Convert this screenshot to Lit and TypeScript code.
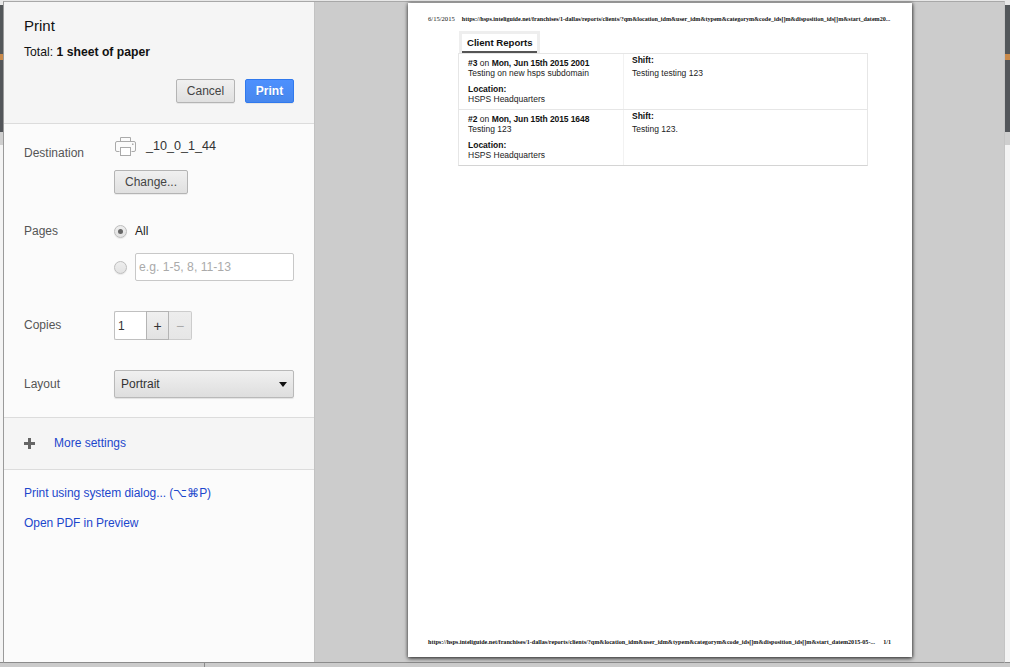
import { LitElement, html, css } from "lit";
import { customElement } from "lit/decorators.js";

@customElement("app-root")
export class AppRoot extends LitElement {
  static styles = css`
    :host { display: block; position: relative; width: 1010px; height: 667px; overflow: hidden; background: #fff; font-family: "Liberation Sans", Arial, sans-serif; font-size: 12px; color: #333; }
    * { box-sizing: border-box; }
    .bg { position: absolute; inset: 0; display: flex; flex-direction: column; }
    .bg-top { height: 5px; background: #e8e8e8; }
    .bg-dark1 { height: 49px; background: #53575a; }
    .bg-orange { height: 6px; background: #c98a4b; }
    .bg-dark2 { height: 72px; background: #53565a; }
    .bg-gray { height: 13px; background: #cfcfcf; }
    .bg-rest { flex: 1; background: #f4f4f4; }
    .bg-bottom { position: absolute; left: 0; right: 0; bottom: 0; height: 5px; background: #cbcbcb; border-top: 1px solid #8c8c8c; }
    .bg-tick { position: absolute; left: 204px; bottom: 0; width: 1px; height: 5px; background: #8a8a8a; }
    .dialog { position: absolute; left: 3px; top: 1px; width: 1002px; height: 662px; display: flex; background: #ccc; border-top: 1px solid #a8a8a8; border-left: 1px solid #9a9a9a; border-right: 1px solid #c4c4c4; border-bottom: 1px solid #8c8c8c; }
    .side { width: 311px; flex: none; background: #fbfbfb; border-right: 1px solid #c2c2c2; display: flex; flex-direction: column; }
    .head { height: 122px; flex: none; background: #f5f5f5; border-bottom: 1px solid #dcdcdc; padding: 15px 20px 0 20px; display: flex; flex-direction: column; }
    h1 { margin: 0; font-size: 15px; font-weight: 400; line-height: 17px; color: #111; }
    .total { margin-top: 11px; font-size: 12.2px; line-height: 15px; color: #111; }
    .total b { font-weight: 700; }
    .head-actions { display: flex; justify-content: flex-end; gap: 10px; margin-top: 19px; }
    button { font-family: inherit; font-size: 12px; color: #444; height: 24px; padding: 0; border: 1px solid #b4b4b4; border-radius: 2px; background: linear-gradient(#f0f0f0, #e0e0e0); box-shadow: 0 1px 0 rgba(0,0,0,.06); }
    .cancel { width: 59px; }
    .primary { width: 49px; background: linear-gradient(#4d90fe, #4787ed); border-color: #3079ed; color: #fff; font-weight: 700; text-shadow: 0 1px rgba(0,0,0,.15); }
    .row { display: flex; padding-left: 20px; }
    .label { width: 90px; flex: none; font-size: 12px; color: #555; line-height: 14px; }
    .body { flex: 1; min-width: 0; }
    .dest { margin-top: 10px; }
    .dest .label { padding-top: 12px; }
    .printer { display: flex; align-items: center; gap: 9px; height: 24px; font-size: 12.6px; color: #333; }
    .change { display: block; width: 74px; margin-top: 12px; }
    .pages { margin-top: 30px; }
    .pages .label { padding-top: 0; }
    .radio-row { display: flex; align-items: center; gap: 8px; height: 14px; font-size: 12px; color: #222; }
    .radio { width: 13px; height: 13px; border-radius: 50%; border: 1px solid #bdbdbd; background: linear-gradient(#eee, #e2e2e2); box-shadow: 0 1px 1px rgba(0,0,0,.08); display: flex; align-items: center; justify-content: center; flex: none; }
    .radio i { width: 5px; height: 5px; border-radius: 50%; background: #666; }
    .radio-input { display: flex; align-items: center; gap: 8px; margin-top: 15px; }
    .range { width: 159px; height: 28px; border: 1px solid #c8c8c8; border-radius: 2px; background: #fff; padding: 0 3px; display: flex; align-items: center; color: #aaa; font-size: 12.2px; }
    .copies { margin-top: 30px; }
    .copies .label { padding-top: 7px; }
    .stepper { display: flex; height: 29px; width: 78px; }
    .num { width: 32px; border: 1px solid #c0c0c0; border-right: none; border-radius: 2px 0 0 2px; background: #fff; padding: 0 0 0 3px; display: flex; align-items: center; font-size: 12px; color: #333; }
    .step { width: 23px; display: flex; align-items: center; justify-content: center; font-size: 14px; font-weight: 400; background: linear-gradient(#f0f0f0, #e2e2e2); border: 1px solid #b4b4b4; color: #333; }
    .step.off { color: #aaa; border-color: #ccc; border-left: none; border-radius: 0 2px 2px 0; background: linear-gradient(#ededed, #e6e6e6); }
    .layout { margin-top: 30px; }
    .layout .label { padding-top: 7px; }
    .select { width: 180px; height: 28px; display: flex; align-items: center; justify-content: space-between; padding: 0 6px 0 6px; border: 1px solid #b9b9b9; border-radius: 2px; background: linear-gradient(#f0f0f0, #dedede); box-shadow: 0 1px 1px rgba(0,0,0,.1); font-size: 12px; color: #333; }
    .arrow { width: 0; height: 0; border-left: 4px solid transparent; border-right: 4px solid transparent; border-top: 5px solid #111; }
    .more { margin-top: 19px; height: 53px; flex: none; background: #f5f5f5; border-top: 1px solid #dcdcdc; border-bottom: 1px solid #dcdcdc; padding: 0 0 1px 20px; display: flex; align-items: center; gap: 19px; }
    .links { padding: 16px 20px; display: flex; flex-direction: column; gap: 16px; }
    .links a { letter-spacing: -0.05px; }
    a { color: #1c47cc; font-size: 12px; line-height: 14px; text-decoration: none; }
    .preview { flex: 1; min-width: 0; background: #ccc; padding: 1px 0 0 93px; }
    .paper { position: relative; width: 504px; height: 654px; background: #fff; box-shadow: 0 2px 4px rgba(0,0,0,.55), 1px 0 3px rgba(0,0,0,.4), -1px 0 3px rgba(0,0,0,.2); padding: 13px 20px 0 20px; display: flex; flex-direction: column; color: #111; }
    .print-hdr { display: flex; gap: 7px; font-family: "Liberation Serif", serif; font-size: 6.08px; line-height: 6px; white-space: nowrap; color: #111; }
    .print-hdr .date { font-size: 6.6px; }
    .print-ftr { position: absolute; left: 20px; right: 21px; bottom: 12px; display: flex; justify-content: space-between; font-family: "Liberation Serif", serif; font-size: 6.12px; line-height: 6px; white-space: nowrap; color: #111; font-weight: 700; }
    .report { margin: 9px 0 0 30px; width: 410px; }
    .tabs { display: flex; padding-left: 1px; }
    .tab { height: 22px; border: 3px solid #eee; border-bottom: none; padding: 3px 4px 0 5px; font-size: 9.6px; font-weight: 700; color: #111; width: 81px; position: relative; line-height: 12px; white-space: nowrap; }
    .tab::after { content: ""; position: absolute; left: 0; right: 0; bottom: 0; height: 2px; background: #555; }
    .table { border: 1px solid #e6e6e6; border-bottom-color: #d4d4d4; }
    .tr { display: grid; grid-template-columns: 164px 1fr; height: 56px; font-size: 8.5px; line-height: 10px; color: #222; }
    .tr:first-child { height: 55px; }
    .tr + .tr { border-top: 1px solid #e6e6e6; }
    .td { padding: 1px 8px 0 8px; }
    .td + .td { border-left: 1px solid #f2f2f2; }
    .td.first { padding: 4px 8px 0 9px; }
    .td p { margin: 0; }
    .td .gap { margin-top: 6px; }
    .td .shift { margin-bottom: 3px; }
    .when { letter-spacing: -0.09px; }
    b { font-weight: 700; color: #111; }
  `;

  private rowCell(n: string, title: string) {
    return html`<div class="td first"><p><b>${n}</b> on <b class="when">Mon, Jun 15th 2015 ${n === "#3" ? "2001" : "1648"}</b></p><p>${title}</p><p class="gap"><b>Location:</b></p><p>HSPS Headquarters</p></div>`;
  }

  render() {
    return html`
      <div class="bg">
        <div class="bg-top"></div><div class="bg-dark1"></div><div class="bg-orange"></div><div class="bg-dark2"></div><div class="bg-gray"></div><div class="bg-rest"></div>
        <div class="bg-bottom"></div><div class="bg-tick"></div>
      </div>
      <div class="dialog">
        <aside class="side">
          <header class="head">
            <h1>Print</h1>
            <div class="total">Total: <b>1 sheet of paper</b></div>
            <div class="head-actions"><button class="cancel">Cancel</button><button class="primary">Print</button></div>
          </header>
          <section class="row dest">
            <div class="label">Destination</div>
            <div class="body">
              <div class="printer">
                <svg width="23" height="21" viewBox="0 0 23 21" fill="none" stroke="#aaa" stroke-width="1">
                  <path d="M6.5 5.5V1.5h10v4" />
                  <path d="M5.5 15.5H3a1.5 1.5 0 0 1-1.5-1.5V7A1.5 1.5 0 0 1 3 5.5h17A1.5 1.5 0 0 1 21.500 7v7a1.500 1.500 0 0 1-1.500 1.500h-2.500" />
                  <rect x="6.500" y="11.500" width="10" height="8" fill="#fff" />
                  <rect x="18" y="7.500" width="1.500" height="1.500" fill="#aaa" stroke="none" />
                </svg>
                <span>_10_0_1_44</span>
              </div>
              <button class="change">Change...</button>
            </div>
          </section>
          <section class="row pages">
            <div class="label">Pages</div>
            <div class="body">
              <div class="radio-row"><span class="radio"><i></i></span><span>All</span></div>
              <div class="radio-input"><span class="radio"></span><div class="range">e.g. 1-5, 8, 11-13</div></div>
            </div>
          </section>
          <section class="row copies">
            <div class="label">Copies</div>
            <div class="body">
              <div class="stepper"><div class="num">1</div><div class="step">+</div><div class="step off">−</div></div>
            </div>
          </section>
          <section class="row layout">
            <div class="label">Layout</div>
            <div class="body"><div class="select"><span>Portrait</span><span class="arrow"></span></div></div>
          </section>
          <div class="more">
            <svg width="11" height="11" viewBox="0 0 11 11"><path d="M4 0h3v4h4v3H7v4H4V7H0V4h4z" fill="#666" /></svg>
            <a>More settings</a>
          </div>
          <div class="links">
            <a>Print using system dialog... (⌥⌘P)</a>
            <a>Open PDF in Preview</a>
          </div>
        </aside>
        <main class="preview">
          <div class="paper">
            <div class="print-hdr"><span class="date">6/15/2015</span><b>https://hsps.inteliguide.net/franchises/1-dallas/reports/clients/?qm&amp;location_idm&amp;user_idm&amp;typem&amp;categorym&amp;code_ids[]m&amp;disposition_ids[]m&amp;start_datem20...</b></div>
            <div class="report">
              <div class="tabs"><div class="tab">Client Reports</div></div>
              <div class="table">
                <div class="tr">
                  ${this.rowCell("#3", "Testing on new hsps subdomain")}
                  <div class="td"><p class="shift"><b>Shift:</b></p><p>Testing testing 123</p></div>
                </div>
                <div class="tr">
                  ${this.rowCell("#2", "Testing 123")}
                  <div class="td"><p class="shift"><b>Shift:</b></p><p>Testing 123.</p></div>
                </div>
              </div>
            </div>
            <div class="print-ftr"><span>https://hsps.inteliguide.net/franchises/1-dallas/reports/clients/?qm&amp;location_idm&amp;user_idm&amp;typem&amp;categorym&amp;code_ids[]m&amp;disposition_ids[]m&amp;start_datem2015-05-...</span><span>1/1</span></div>
          </div>
        </main>
      </div>
    `;
  }
}
